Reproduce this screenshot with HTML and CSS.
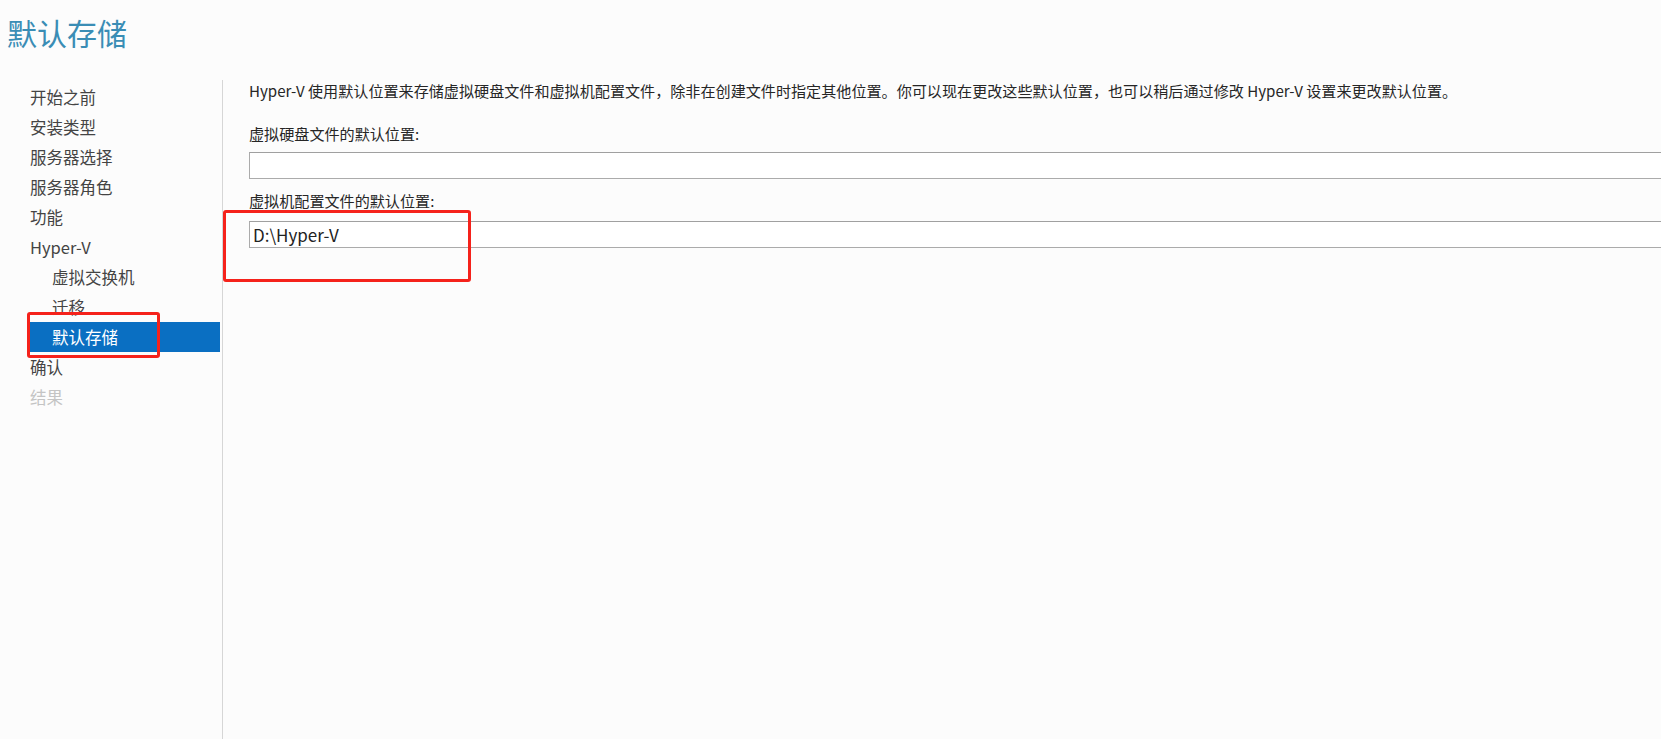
FILE: index.html
```html
<!DOCTYPE html>
<html lang="zh-CN">
<head>
<meta charset="utf-8">
<title>默认存储</title>
<link rel="stylesheet" href="styles.css">
</head>
<body>
<div class="page">
  <header class="header">
    <h1 class="title">默认存储</h1>
  </header>
  <div class="body">
    <nav class="sidebar">
      <div class="nav-item">开始之前</div>
      <div class="nav-item">安装类型</div>
      <div class="nav-item">服务器选择</div>
      <div class="nav-item">服务器角色</div>
      <div class="nav-item">功能</div>
      <div class="nav-item">Hyper-V</div>
      <div class="nav-item sub">虚拟交换机</div>
      <div class="nav-item sub">迁移</div>
      <div class="nav-item sub active">默认存储</div>
      <div class="nav-item">确认</div>
      <div class="nav-item disabled">结果</div>
    </nav>
    <main class="content">
      <p class="intro">Hyper-V 使用默认位置来存储虚拟硬盘文件和虚拟机配置文件，除非在创建文件时指定其他位置。你可以现在更改这些默认位置，也可以稍后通过修改 Hyper-V 设置来更改默认位置。</p>
      <label class="field-label">虚拟硬盘文件的默认位置:</label>
      <div class="field"></div>
      <label class="field-label second">虚拟机配置文件的默认位置:</label>
      <div class="field field-second">D:\Hyper-V</div>
    </main>
  </div>
  <div class="mark mark-nav"></div>
  <div class="mark mark-field"></div>
</div>
</body>
</html>
```

FILE: styles.css
```css
html, body {
  margin: 0;
  padding: 0;
  background: #fcfcfc;
}
body {
  font-family: "Microsoft YaHei", "Noto Sans CJK SC", "Noto Sans", sans-serif;
  color: #333;
  overflow: hidden;
}
.page {
  position: relative;
  width: 1661px;
  height: 739px;
  display: flex;
  flex-direction: column;
}
.header {
  height: 80px;
  flex: none;
}
.title {
  margin: 0;
  padding: 12px 0 0 7px;
  font-size: 30px;
  font-weight: normal;
  line-height: 40px;
  color: #3a8db5;
}
.body {
  flex: 1;
  display: flex;
  min-height: 0;
}
.sidebar {
  width: 223px;
  flex: none;
  border-right: 1px solid #d6d6d6;
  padding-top: 2px;
  box-sizing: border-box;
}
.nav-item {
  height: 30px;
  line-height: 30px;
  font-size: 16.5px;
  color: #444;
  padding-left: 30px;
  white-space: nowrap;
}
.nav-item.sub {
  padding-left: 22px;
  margin-left: 30px;
}
.nav-item.active {
  background: #0a6fc2;
  color: #fff;
  margin-right: 2px;
}
.nav-item.disabled {
  color: #c4c4c4;
}
.content {
  flex: 1;
  padding-left: 26px;
  min-width: 0;
  overflow: hidden;
}
.intro {
  margin: 0;
  font-size: 15.1px;
  line-height: 20px;
  color: #262626;
  white-space: nowrap;
}
.field-label {
  display: block;
  margin-top: 23px;
  font-size: 15.1px;
  line-height: 20px;
  color: #262626;
}
.field-label.second {
  margin-top: 11px;
}
.field {
  margin-top: 9px;
  height: 27px;
  box-sizing: border-box;
  width: calc(100% + 20px);
  border: 1px solid #ababab;
  border-top-color: #a0a0a0;
  background: #fff;
  font-size: 17px;
  line-height: 25px;
  padding-left: 3px;
  color: #222;
}
.field-second {
  margin-top: 11px;
}
.mark {
  position: absolute;
  border: 3px solid #f5221b;
  border-radius: 3px;
  box-sizing: border-box;
}
.mark-nav {
  left: 27px;
  top: 312px;
  width: 133px;
  height: 46px;
}
.mark-field {
  left: 223px;
  top: 210px;
  width: 248px;
  height: 72px;
}
```
